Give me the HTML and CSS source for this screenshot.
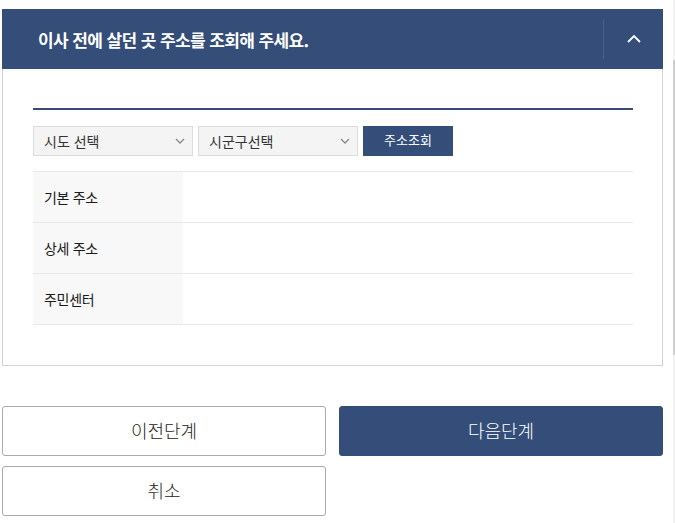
FILE: index.html
```html
<!DOCTYPE html>
<html lang="ko">
<head>
<meta charset="utf-8">
<link rel="stylesheet" href="styles.css">
</head>
<body>
<div class="page">
  <section class="panel">
    <header class="panel-head">
      <h2 class="panel-title">이사 전에 살던 곳 주소를 조회해 주세요.</h2>
      <button class="toggle" aria-label="접기">
        <svg width="14" height="9" viewBox="0 0 14 9"><path d="M1 8 L7 2 L13 8" fill="none" stroke="#fff" stroke-width="1.8"/></svg>
      </button>
    </header>
    <div class="panel-body">
      <div class="rule"></div>
      <div class="search">
        <div class="select"><span>시도 선택</span><svg width="10" height="6" viewBox="0 0 10 6"><path d="M1 1 L5 5 L9 1" fill="none" stroke="#888" stroke-width="1.3"/></svg></div>
        <div class="select"><span>시군구선택</span><svg width="10" height="6" viewBox="0 0 10 6"><path d="M1 1 L5 5 L9 1" fill="none" stroke="#888" stroke-width="1.3"/></svg></div>
        <button class="btn-search">주소조회</button>
      </div>
      <div class="table">
        <div class="row"><div class="th">기본 주소</div><div class="td"></div></div>
        <div class="row"><div class="th">상세 주소</div><div class="td"></div></div>
        <div class="row"><div class="th">주민센터</div><div class="td"></div></div>
      </div>
    </div>
  </section>
  <div class="actions">
    <button class="btn">이전단계</button>
    <button class="btn primary">다음단계</button>
    <button class="btn">취소</button>
  </div>
</div>
<div class="scrollbar"><div class="thumb"></div></div>
</body>
</html>
```

FILE: styles.css
```css
* { box-sizing: border-box; }
html, body { margin: 0; padding: 0; background: #fff; }
body {
  font-family: "Noto Sans CJK KR", "Noto Sans", sans-serif;
  color: #333;
  overflow: hidden;
}
.page {
  width: 661px;
  margin-left: 2px;
  padding-top: 9px;
}
.panel-head {
  height: 60px;
  background: #344d79;
  display: flex;
  align-items: center;
  padding-left: 36px;
}
.panel-title {
  margin: 0;
  flex: 1;
  color: #fff;
  font-size: 17px;
  font-weight: 700;
  letter-spacing: -0.6px;
}
.toggle {
  width: 60px;
  height: 40px;
  border: 0;
  border-left: 1px solid #4a6190;
  background: transparent;
  display: flex;
  align-items: center;
  justify-content: center;
  padding: 0;
  padding-bottom: 2px;
}
.panel-body {
  border: 1px solid #d2d2d2;
  border-top: 0;
  padding: 39px 29px 40px 30px;
}
.rule {
  height: 2px;
  background: #344d79;
}
.search {
  display: flex;
  gap: 5px;
  margin-top: 16px;
}
.select {
  width: 160px;
  height: 30px;
  background: #f4f4f4;
  border: 1px solid #dcdcdc;
  display: flex;
  align-items: center;
  justify-content: space-between;
  padding: 0 7px 0 10px;
  font-size: 14px;
  color: #333;
}
.btn-search {
  width: 90px;
  height: 30px;
  border: 0;
  background: #344d79;
  color: #fff;
  font-family: inherit;
  font-size: 13px;
  padding: 0 0 3px;
}
.table {
  margin-top: 15px;
  border-top: 1px solid #e8e8e8;
}
.row {
  display: flex;
  height: 51px;
  border-bottom: 1px solid #e8e8e8;
}
.th {
  width: 150px;
  background: #f8f8f8;
  display: flex;
  align-items: center;
  padding-left: 11px;
  font-size: 14px;
  font-weight: 400;
  color: #1a1a1a;
  letter-spacing: -0.3px;
}
.td { flex: 1; }
.actions {
  margin-top: 40px;
  display: grid;
  grid-template-columns: 324px 324px;
  column-gap: 13px;
  row-gap: 10px;
}
.btn {
  height: 50px;
  border: 1px solid #aaa;
  border-radius: 3px;
  background: #fff;
  font-family: inherit;
  font-size: 18px;
  font-weight: 300;
  color: #222;
  padding: 0 0 3px;
}
.btn.primary {
  background: #344d79;
  border-color: #344d79;
  color: #fff;
}
.scrollbar {
  position: fixed;
  top: 0;
  right: 0;
  width: 2px;
  height: 523px;
  background: #f1f1f1;
}
.thumb {
  margin-top: 60px;
  height: 295px;
  background: #cfcfcf;
}
```
